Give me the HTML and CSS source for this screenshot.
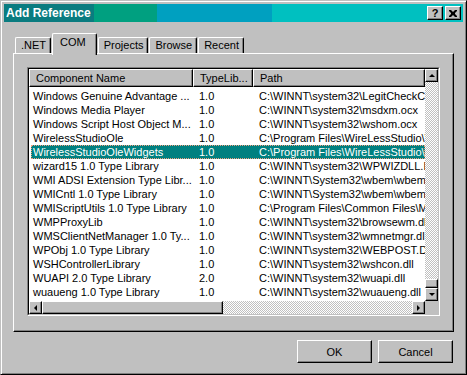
FILE: index.html
```html
<!doctype html>
<html lang="en">
<head>
    <meta charset="utf-8"/>
    <title>Add Reference</title>
    <link rel="stylesheet" href="styles.css">
</head>
<body>
<div class="window">
    <div class="titlebar">
        <span class="title">Add Reference</span>
        <div class="title-buttons">
            <span class="tbtn help">?</span>
            <span class="tbtn close">
                <svg width="8" height="7" viewBox="0 0 8 7"><path d="M0 0h2l2 2 2-2h2v1l-2 2v1l2 2v1h-2l-2-2-2 2h-2v-1l2-2v-1l-2-2z" fill="#000"/></svg>
            </span>
        </div>
    </div>

    <div class="tabs">
        <div class="tab">.NET</div>
        <div class="tab active">COM</div>
        <div class="tab">Projects</div>
        <div class="tab">Browse</div>
        <div class="tab">Recent</div>
    </div>

    <div class="panel">
        <div class="listbox">
            <div class="listbox-inner">
                <div class="list-main">
                    <div class="list-area">
                        <div class="header">
                            <div class="hcell">Component Name</div>
                            <div class="hcell">TypeLib...</div>
                            <div class="hcell">Path</div>
                        </div>
                        <div class="rows">
                            <div class="row"><span>Windows Genuine Advantage ...</span><span>1.0</span><span>C:\WINNT\system32\LegitCheckControl.dll</span></div>
                            <div class="row"><span>Windows Media Player</span><span>1.0</span><span>C:\WINNT\system32\msdxm.ocx</span></div>
                            <div class="row"><span>Windows Script Host Object M...</span><span>1.0</span><span>C:\WINNT\system32\wshom.ocx</span></div>
                            <div class="row"><span>WirelessStudioOle</span><span>1.0</span><span>C:\Program Files\WireLessStudio\WirelessStudioOle.dll</span></div>
                            <div class="row selected"><span>WirelessStudioOleWidgets</span><span>1.0</span><span>C:\Program Files\WireLessStudio\WirelessStudioOleWidgets.dll</span></div>
                            <div class="row"><span>wizard15 1.0 Type Library</span><span>1.0</span><span>C:\WINNT\system32\WPWIZDLL.DLL</span></div>
                            <div class="row"><span>WMI ADSI Extension Type Libr...</span><span>1.0</span><span>C:\WINNT\System32\wbem\wbemads.dll</span></div>
                            <div class="row"><span>WMICntl 1.0 Type Library</span><span>1.0</span><span>C:\WINNT\System32\wbem\wbemcntl.dll</span></div>
                            <div class="row"><span>WMIScriptUtils 1.0 Type Library</span><span>1.0</span><span>C:\Program Files\Common Files\Microsoft Shared\wmi.dll</span></div>
                            <div class="row"><span>WMPProxyLib</span><span>1.0</span><span>C:\WINNT\system32\browsewm.dll</span></div>
                            <div class="row"><span>WMSClientNetManager 1.0 Ty...</span><span>1.0</span><span>C:\WINNT\system32\wmnetmgr.dll</span></div>
                            <div class="row"><span>WPObj 1.0 Type Library</span><span>1.0</span><span>C:\WINNT\system32\WEBPOST.DLL</span></div>
                            <div class="row"><span>WSHControllerLibrary</span><span>1.0</span><span>C:\WINNT\system32\wshcon.dll</span></div>
                            <div class="row"><span>WUAPI 2.0 Type Library</span><span>2.0</span><span>C:\WINNT\system32\wuapi.dll</span></div>
                            <div class="row"><span>wuaueng 1.0 Type Library</span><span>1.0</span><span>C:\WINNT\system32\wuaueng.dll</span></div>
                        </div>
                    </div>
                    <div class="vscroll">
                        <div class="sbtn"><i class="arrow up"></i></div>
                        <div class="track vtrack"><div class="thumb vthumb"></div></div>
                        <div class="sbtn"><i class="arrow down"></i></div>
                    </div>
                </div>
                <div class="hscroll-row">
                    <div class="hscroll">
                        <div class="sbtn"><i class="arrow left"></i></div>
                        <div class="thumb hthumb"></div>
                        <div class="track htrack"></div>
                        <div class="sbtn"><i class="arrow right"></i></div>
                    </div>
                    <div class="corner"></div>
                </div>
            </div>
        </div>
    </div>

    <div class="buttons">
        <button class="btn">OK</button>
        <button class="btn">Cancel</button>
    </div>
</div>
</body>
</html>
```

FILE: styles.css
```css
body{
    margin: 0;
    background: #c0c0c0;
    font-family: "Liberation Sans", Arial, sans-serif;
    font-size: 11px;
    color: #000;
}

.window{
    box-sizing: border-box;
    width: 467px;
    height: 375px;
    padding: 3px;
    border: 1px solid;
    border-color: #c0c0c0 #000 #000 #c0c0c0;
    box-shadow: inset 1px 1px #fff, inset -1px -1px #808080;
    background: #c0c0c0;
}

.titlebar{
    height: 18px;
    display: flex;
    align-items: center;
    padding: 0 2px 0 2px;
    background: linear-gradient(to right, #0a7c80 0 90px, #00a080 90px 153px, #00a0c0 153px 268px, #00c0c0 268px);
}
.title{
    color: #fff;
    font-weight: bold;
    font-size: 12px;
}
.title-buttons{
    margin-left: auto;
    display: flex;
    gap: 2px;
}
.tbtn{
    box-sizing: border-box;
    width: 16px;
    height: 14px;
    display: flex;
    align-items: center;
    justify-content: center;
    background: #c0c0c0;
    border: 1px solid;
    border-color: #fff #000 #000 #fff;
    box-shadow: inset -1px -1px #808080;
    font-weight: bold;
    font-size: 11px;
    line-height: 1;
}

.tabs{
    display: flex;
    align-items: flex-end;
    margin: 11px 0 0 11px;
    height: 20px;
}
.tab{
    box-sizing: border-box;
    height: 16px;
    padding: 0 4px 0 5px;
    line-height: 15px;
    border: 1px solid;
    border-bottom: none;
    border-color: #fff #000 #000 #fff;
    border-radius: 2px 2px 0 0;
    box-shadow: inset -1px 0 #808080;
    margin-right: 1px;
}
.tab.active{
    height: 22px;
    padding: 0 10px 0 7px;
    line-height: 17px;
    margin-bottom: -2px;
    background: #c0c0c0;
    position: relative;
    z-index: 1;
}

.panel{
    box-sizing: border-box;
    width: 441px;
    height: 279px;
    margin-left: 9px;
    padding: 13px 13px 17px 13px;
    border: 1px solid;
    border-color: #fff #000 #000 #fff;
    box-shadow: inset -1px -1px #808080;
}

.listbox{
    height: 100%;
    border: 1px solid;
    border-color: #808080 #fff #fff #808080;
}
.listbox-inner{
    height: 100%;
    box-sizing: border-box;
    border: 1px solid;
    border-color: #000 #c0c0c0 #c0c0c0 #000;
    background: #fff;
    display: flex;
    flex-direction: column;
}
.list-main{
    flex: 1;
    display: flex;
    min-height: 0;
}
.list-area{
    flex: 1;
    overflow: hidden;
}

.header{
    display: grid;
    grid-template-columns: 164px 60px 1fr;
    height: 18px;
}
.hcell{
    box-sizing: border-box;
    padding-left: 6px;
    line-height: 16px;
    background: #c0c0c0;
    border: 1px solid;
    border-color: #fff #000 #000 #fff;
    box-shadow: inset -1px -1px #808080;
    white-space: nowrap;
    overflow: hidden;
}

.rows{
    padding-top: 2px;
}
.row{
    display: grid;
    grid-template-columns: 162px 60px 1fr;
    height: 14px;
    line-height: 14px;
    margin-left: 2px;
    white-space: nowrap;
}
.row span{
    overflow: hidden;
    padding-left: 6px;
}
.row span:first-child{
    padding-left: 2px;
}
.row.selected{
    background: #008080;
    color: #fff;
    outline: 1px dotted #f0a080;
    outline-offset: -1px;
}

.vscroll{
    width: 13px;
    display: flex;
    flex-direction: column;
}
.sbtn{
    box-sizing: border-box;
    width: 13px;
    height: 13px;
    flex: none;
    background: #c0c0c0;
    border: 1px solid;
    border-color: #fff #000 #000 #fff;
    box-shadow: inset -1px -1px #808080;
    display: flex;
    align-items: center;
    justify-content: center;
}
.track{
    background: repeating-conic-gradient(#fff 0 25%, #c0c0c0 0 50%) 0 0/2px 2px;
}
.vtrack{
    flex: 1;
    display: flex;
    flex-direction: column;
    justify-content: flex-end;
}
.thumb{
    box-sizing: border-box;
    background: #c0c0c0;
    border: 1px solid;
    border-color: #fff #000 #000 #fff;
    box-shadow: inset -1px -1px #808080;
}
.vthumb{
    height: 9px;
}
.hscroll-row{
    display: flex;
    height: 13px;
}
.hscroll{
    flex: 1;
    display: flex;
}
.hthumb{
    width: 181px;
}
.htrack{
    flex: 1;
}
.corner{
    width: 13px;
    background: #c0c0c0;
}

.arrow{
    width: 0;
    height: 0;
    border: 3px solid transparent;
}
.arrow.up{
    border-bottom-color: #000;
    border-top-width: 0;
    margin-top: -1px;
}
.arrow.down{
    border-top-color: #000;
    border-bottom-width: 0;
}
.arrow.left{
    border-right-color: #000;
    border-left-width: 0;
}
.arrow.right{
    border-left-color: #000;
    border-right-width: 0;
}

.buttons{
    display: flex;
    justify-content: flex-end;
    gap: 6px;
    margin-top: 8px;
    padding-right: 10px;
}
.btn{
    box-sizing: border-box;
    width: 75px;
    height: 23px;
    background: #c0c0c0;
    border: 1px solid;
    border-color: #fff #000 #000 #fff;
    box-shadow: inset -1px -1px #808080;
    font-family: "Liberation Sans", Arial, sans-serif;
    font-size: 11px;
    color: #000;
    padding: 0;
}
```
